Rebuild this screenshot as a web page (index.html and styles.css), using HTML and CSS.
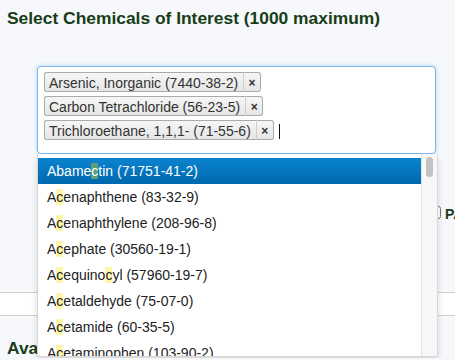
FILE: index.html
```html
<!DOCTYPE html>
<html lang="en">
<head>
    <meta charset="UTF-8">
    <meta name="viewport" content="width=device-width, initial-scale=1.0">
    <title>Select Chemicals</title>
    <link rel="stylesheet" href="styles.css">
</head>
<body>
    <div class="page">
        <h2 class="title">Select Chemicals of Interest (1000 maximum)</h2>

        <div class="chosen-container">
            <ul class="chosen-choices">
                <li class="search-choice"><span>Arsenic, Inorganic (7440-38-2)</span><a class="close">×</a></li>
                <li class="search-choice"><span>Carbon Tetrachloride (56-23-5)</span><a class="close">×</a></li>
                <li class="search-choice"><span>Trichloroethane, 1,1,1- (71-55-6)</span><a class="close">×</a><i class="caret"></i></li>
            </ul>

            <div class="chosen-drop">
                <ul class="chosen-results">
                    <li class="result highlighted">Abame<em>c</em>tin (71751-41-2)</li>
                    <li class="result">A<em>c</em>enaphthene (83-32-9)</li>
                    <li class="result">A<em>c</em>enaphthylene (208-96-8)</li>
                    <li class="result">A<em>c</em>ephate (30560-19-1)</li>
                    <li class="result">A<em>c</em>equino<em>c</em>yl (57960-19-7)</li>
                    <li class="result">A<em>c</em>etaldehyde (75-07-0)</li>
                    <li class="result">A<em>c</em>etamide (60-35-5)</li>
                    <li class="result">A<em>c</em>etaminophen (103-90-2)</li>
                    <li class="result">A<em>c</em>etanilide (103-84-4)</li>
                </ul>
                <div class="scrollbar"><div class="thumb"></div></div>
            </div>
        </div>

        <div class="option-row">
            <label><input type="checkbox">PAHs only</label>
        </div>
    </div>

    <div class="band"></div>

    <div class="page">
        <h2 class="title lower">Available Chemicals</h2>
    </div>
</body>
</html>
```

FILE: styles.css
```css
body {
    margin: 0;
    background-color: #f6f8fb;
    font-family: "Liberation Sans", Arial, sans-serif;
    overflow: hidden;
}
.page {
    padding: 0 7px;
}
.title {
    margin: 0;
    padding-top: 8px;
    font-size: 17.4px;
    line-height: 20px;
    font-weight: bold;
    color: #173d17;
    white-space: nowrap;
}
.title.lower {
    padding-top: 22px;
}
.chosen-container {
    position: relative;
    margin: 38px 0 0 30px;
    width: 399px;
}
.chosen-choices {
    list-style: none;
    margin: 0;
    padding: 5px 6px 4px;
    height: 77px;
    background: white;
    border: 1px solid #7fb6ec;
    border-radius: 4px;
    box-shadow: 0 0 4px rgba(82, 168, 236, 0.45);
}
.search-choice {
    display: flex;
    align-items: stretch;
    width: max-content;
    height: 20px;
    margin-bottom: 4px;
    font-size: 14px;
    line-height: 20px;
    color: #333;
}
.search-choice span {
    padding: 0 5px 0 4px;
    border: 1px solid #aaa;
    border-right: none;
    border-radius: 3px 0 0 3px;
    background: linear-gradient(#f6f6f6, #e6e6e6);
}
.close {
    width: 16px;
    text-align: center;
    font-size: 12px;
    font-weight: bold;
    color: #333;
    border: 1px solid #aaa;
    border-left: 1px solid #cfcfcf;
    border-radius: 0 3px 3px 0;
    background: linear-gradient(#f6f6f6, #e6e6e6);
}
.caret {
    width: 1px;
    height: 15px;
    margin: 4px 0 0 5px;
    background: #111;
}
.chosen-drop {
    position: absolute;
    top: 88px;
    left: 0;
    width: 399px;
    height: 202px;
    background: white;
    border: 1px solid #d8d8d8;
    border-top: none;
    border-radius: 0 0 4px 4px;
    box-shadow: 0 4px 6px rgba(0, 0, 0, 0.15);
    overflow: hidden;
    display: flex;
}
.chosen-results {
    list-style: none;
    margin: 0;
    padding: 4px 0 0;
    flex: 1;
}
.result {
    padding: 4px 9px;
    font-size: 14px;
    line-height: 18px;
    color: #222;
    white-space: nowrap;
}
.result em {
    font-style: normal;
    background: #fdf6a8;
}
.result.highlighted {
    color: white;
    background: linear-gradient(#0a84cf, #0068ad);
}
.result.highlighted em {
    background: #5b9e78;
}
.scrollbar {
    width: 15px;
    background: #f7f7f7;
    border-left: 1px solid #e4e4e4;
}
.thumb {
    width: 7px;
    height: 20px;
    margin: 3px auto 0;
    border-radius: 4px;
    background: #c2c2c2;
}
.option-row {
    display: flex;
    padding: 52px 0 0 421px;
    height: 20px;
    white-space: nowrap;
    font-size: 14px;
    font-weight: bold;
    color: #173d17;
}
.option-row input {
    margin: 0 4px 0 0;
}
.band {
    margin-top: 66px;
    height: 22px;
    background: white;
    border-top: 1px solid #cfcfcf;
    border-bottom: 1px solid #cfcfcf;
}
```
